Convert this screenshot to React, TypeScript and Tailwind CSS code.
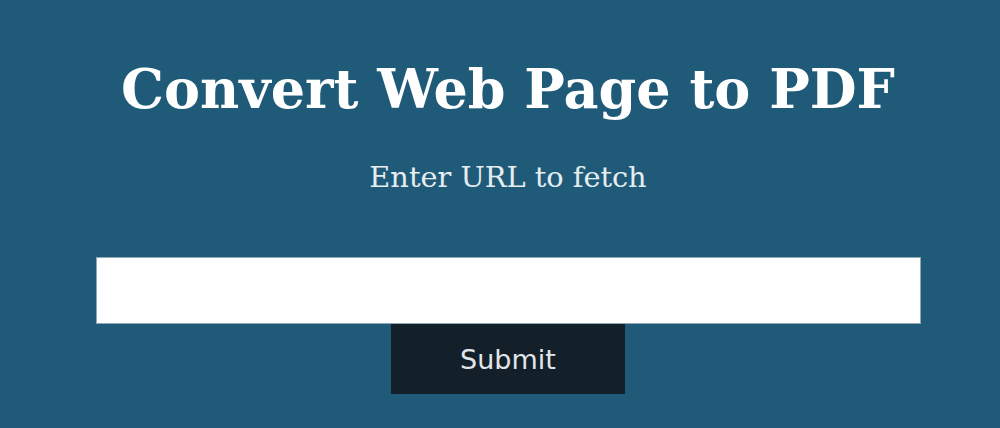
export default function App() {
  return (
    <div className="w-[1000px] h-[428px] bg-[#1f5b78] flex flex-col items-center pl-[16px] overflow-hidden">
      <h1 className="mt-[55px] text-[54px] leading-[68px] font-bold text-white font-['DejaVu_Serif',serif]">
        Convert Web Page to PDF
      </h1>
      <p className="mt-[36px] text-[28.8px] leading-[36px] text-[#e6edf1] font-['DejaVu_Serif',serif]">
        Enter URL to fetch
      </p>
      <input className="mt-[62px] w-[825px] h-[67px] bg-white border border-[#8fa9b8] outline-none" type="text" />
      <button className="w-[234px] h-[70px] pt-[3px] bg-[#13202a] text-[#e2e6e9] text-[27px] font-['DejaVu_Sans',sans-serif]">
        Submit
      </button>
    </div>
  );
}
